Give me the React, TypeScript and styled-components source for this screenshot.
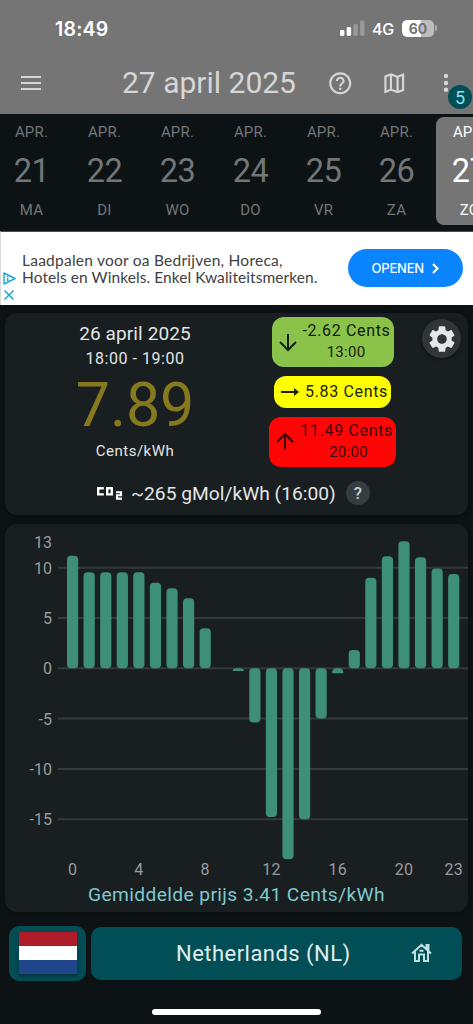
import React from "react";
import styled, { createGlobalStyle } from "styled-components";

const GlobalStyle = createGlobalStyle`
  *, *::before, *::after { box-sizing: border-box; }
  html, body { margin: 0; padding: 0; background: #0d1315; }
  body { overflow: hidden; font-family: Roboto, "Liberation Sans", sans-serif; }
`;

const Screen = styled.div`
  display: flex;
  flex-direction: column;
  width: 473px;
  height: 1024px;
  overflow: hidden;
  background: #0d1315;
`;

const Header = styled.header`
  height: 114px;
  flex: none;
  background: #757575;
`;

const StatusBar = styled.div`
  display: flex;
  align-items: center;
  height: 56px;
  padding: 0 36px 0 55px;
  color: #fff;
`;

const Clock = styled.span`
  flex: 1;
  font: 600 19.5px/24px Inter, sans-serif;
  letter-spacing: 0.2px;
  padding-top: 2px;
`;

const Network = styled.span`
  margin: 2px 8px 0 7px;
  font: 500 16px/20px Inter, sans-serif;
  letter-spacing: -0.2px;
`;

const BatteryWrap = styled.span`
  display: flex;
  align-items: center;
  gap: 1px;
`;

const Battery = styled.span`
  width: 32px;
  height: 17px;
  border-radius: 5px;
  background: linear-gradient(90deg, #fff 60%, #bdbdbd 60%);
  color: #757575;
  font: 700 14px/17px Inter, sans-serif;
  text-align: center;
`;

const BatteryCap = styled.span`
  width: 2px;
  height: 6px;
  border-radius: 0 2px 2px 0;
  background: #b0b0b0;
`;

const Toolbar = styled.div`
  display: flex;
  align-items: center;
  height: 54px;
  padding-left: 21px;
  color: #d6d6d6;
`;

const Title = styled.h1`
  flex: none;
  width: 175px;
  margin: 0 30px 0 81px;
  font-size: 30px;
  font-weight: 400;
  line-height: 36px;
  white-space: nowrap;
`;

const ToolIcon = styled.span<{ $gap?: number }>`
  display: flex;
  margin-right: ${(p) => p.$gap ?? 0}px;
`;

const MenuAnchor = styled.span`
  position: relative;
  display: flex;
`;

const Badge = styled.span`
  position: absolute;
  left: 5px;
  top: 12px;
  width: 24px;
  height: 24px;
  border-radius: 50%;
  background: #024e56;
  color: #8fe0e6;
  font-size: 18px;
  line-height: 25px;
  text-align: center;
`;

const Days = styled.nav`
  display: flex;
  flex: none;
  gap: 7px;
  height: 117px;
  padding: 3px 0 6px;
  margin-left: -2px;
  overflow: hidden;
`;

const Day = styled.div<{ $active?: boolean }>`
  display: flex;
  flex: none;
  flex-direction: column;
  align-items: center;
  width: 66px;
  padding-left: 1px;
  border-radius: 8px;
  background: ${(p) => (p.$active ? "#757575" : "transparent")};
  color: ${(p) => (p.$active ? "#fff" : "#737677")};
`;

const DayText = styled.span`
  font-size: 15px;
  line-height: 20px;
  margin-top: 5px;
  letter-spacing: 0.2px;
`;

const DayNumber = styled.span`
  font-size: 32.5px;
  line-height: 38px;
  margin: 10px 0 5px;
  letter-spacing: -0.4px;
`;

const Ad = styled.section`
  display: flex;
  align-items: center;
  flex: none;
  height: 74px;
  border-top: 1px solid #4a4d4e;
  border-left: 1px solid #d8d8d8;
  background: #fff;
  padding-right: 10px;
`;

const AdMarks = styled.div`
  display: flex;
  flex-direction: column;
  align-items: flex-start;
  gap: 4px;
  width: 21px;
  padding: 40px 0 0 2px;
  align-self: flex-start;
`;

const AdCopy = styled.div`
  display: flex;
  flex: 1;
  flex-direction: column;
  color: #3f4043;
  font: 400 15.5px/16.5px Lato, sans-serif;
  white-space: nowrap;
`;

const AdLine = styled.span<{ $spacing: number }>`
  letter-spacing: ${(p) => p.$spacing}px;
`;

const OpenButton = styled.button`
  display: flex;
  align-items: center;
  justify-content: center;
  gap: 8px;
  width: 115.5px;
  height: 38px;
  margin-top: -1px;
  padding: 0;
  border: 0;
  border-radius: 19px;
  background: #0a85ff;
  color: #fff;
  font: 500 13px/20px Inter, sans-serif;
  letter-spacing: -0.2px;
`;

const Card = styled.section`
  flex: none;
  margin: 0 5px;
  border-radius: 12px;
  background: #191e20;
  color: #e3e5e6;
  box-shadow: 0 1px 4px rgba(0, 0, 0, 0.35);
`;

const PriceCard = styled(Card)`
  height: 202px;
  margin-top: 8px;
`;

const PriceRow = styled.div`
  display: flex;
  height: 160px;
`;

const Current = styled.div`
  display: flex;
  flex-direction: column;
  align-items: center;
  width: 260px;
  padding-top: 8px;
`;

const DateLine = styled.span`
  font-size: 19px;
  line-height: 26px;
  letter-spacing: 0.12px;
`;

const HourLine = styled.span`
  font-size: 16px;
  line-height: 24px;
  letter-spacing: 0.55px;
`;

const BigPrice = styled.span`
  height: 66px;
  margin-top: 1px;
  color: #86791e;
  font-size: 61px;
  line-height: 66px;
  letter-spacing: -0.1px;
`;

const Unit = styled.span`
  margin-top: 3px;
  font-size: 15px;
  line-height: 20px;
  letter-spacing: 0.5px;
`;

const Stats = styled.div`
  display: flex;
  flex-direction: column;
  align-items: center;
  gap: 9px;
  width: 135px;
  padding-top: 4px;
`;

const Pill = styled.div<{ $bg: string; $fg: string; $w: number; $h: number }>`
  display: flex;
  align-items: center;
  justify-content: flex-end;
  width: ${(p) => p.$w}px;
  height: ${(p) => p.$h}px;
  border-radius: 12px;
  padding: 0 3px 1px 7px;
  background: ${(p) => p.$bg};
  color: ${(p) => p.$fg};
  font-size: 16px;
  letter-spacing: 0.66px;
  white-space: nowrap;
`;

const PillText = styled.div`
  display: flex;
  flex: 1;
  flex-direction: column;
  align-items: flex-end;
  line-height: 22px;
`;

const PillTime = styled.span`
  margin-right: 25px;
  font-size: 15px;
  line-height: 21px;
  letter-spacing: 0.3px;
`;

const Settings = styled.button`
  display: flex;
  align-items: center;
  justify-content: center;
  width: 39px;
  height: 39px;
  margin: 6px 0 0 22px;
  padding: 0;
  border: 0;
  border-radius: 50%;
  background: #303538;
  box-shadow: 0 1px 4px rgba(0, 0, 0, 0.5);
`;

const Co2Row = styled.div`
  display: flex;
  align-items: center;
  height: 40px;
  padding-left: 91px;
  font-size: 19.2px;
  letter-spacing: 0.02px;
  white-space: nowrap;
`;

const Co2Text = styled.span`
  width: 205px;
  margin-left: 8px;
`;

const Help = styled.span`
  width: 24px;
  height: 24px;
  margin-left: 10px;
  border-radius: 50%;
  background: #363c3f;
  color: #bcd3d6;
  font-size: 17px;
  font-weight: 500;
  line-height: 25px;
  text-align: center;
`;

const ChartCard = styled(Card)`
  height: 388px;
  margin-top: 9px;
`;

const Chart = styled.svg`
  display: block;
  font-family: Roboto, sans-serif;
  font-size: 16px;
`;

const Average = styled.div`
  color: #7fc9d0;
  font-size: 19.2px;
  line-height: 24px;
  letter-spacing: 0.38px;
  text-align: center;
`;

const Footer = styled.footer`
  display: flex;
  flex: none;
  align-items: center;
  gap: 5px;
  margin: 13px 11px 0 9px;
  height: 56px;
`;

const FlagButton = styled.div`
  display: flex;
  align-items: center;
  justify-content: center;
  width: 77px;
  height: 55px;
  border-radius: 10px;
  background: #034d55;
`;

const Flag = styled.div`
  width: 58px;
  height: 42px;
  background: linear-gradient(#ae1c28 33.3%, #fff 33.3% 66.6%, #21468b 66.6%);
  box-shadow: 0 2px 4px rgba(0, 0, 0, 0.35);
`;

const Country = styled.div`
  display: flex;
  align-items: center;
  flex: 1;
  height: 53px;
  padding: 0 30px 0 85px;
  border-radius: 10px;
  background: #014e56;
  color: #e0eced;
  font-size: 22px;
  letter-spacing: 0.47px;
`;

const CountryName = styled.span`
  flex: 1;
  white-space: nowrap;
`;

const HomeIndicator = styled.div`
  flex: none;
  width: 169px;
  height: 6px;
  margin: 28px auto 0 152px;
  border-radius: 3px;
  background: #fff;
`;

const days = [
  ["21", "MA"],
  ["22", "DI"],
  ["23", "WO"],
  ["24", "DO"],
  ["25", "VR"],
  ["26", "ZA"],
  ["27", "ZO"],
];

const prices = [
  11.2, 9.55, 9.55, 9.55, 9.55, 8.5, 7.95, 6.97, 3.98, 0, -0.28, -5.4, -14.78, -18.97, -15.0, -5.0,
  -0.5, 1.83, 9.0, 11.15, 12.64, 11.05, 9.93, 9.38,
];

const ZERO_Y = 144.3;
const UNIT = 10.06;
const BAR_W = 11.2;

const barX = (hour: number) => 67.6 + hour * 16.57;

function PriceBar({ hour, value }: { hour: number; value: number }) {
  if (value === 0) return null;
  const x = barX(hour) - BAR_W / 2;
  const h = Math.abs(value) * UNIT;
  if (h < 8) {
    const r = Math.min(4.5, h);
    return (
      <path
        fill="#3d8f78"
        d={`M${x} ${ZERO_Y + h}V${ZERO_Y + r}Q${x} ${ZERO_Y} ${x + 4} ${ZERO_Y}H${x + BAR_W - 4}Q${x + BAR_W} ${ZERO_Y} ${x + BAR_W} ${ZERO_Y + r}V${ZERO_Y + h}Z`}
      />
    );
  }
  return (
    <rect x={x} y={value > 0 ? ZERO_Y - h : ZERO_Y} width={BAR_W} height={h} rx={4} fill="#3d8f78" />
  );
}

function PriceChart() {
  return (
    <Chart width="463" height="359" viewBox="0 0 463 359">
      {[10, 5, 0, -5, -10, -15].map((v) => (
        <line key={v} x1="53" x2="463" y1={ZERO_Y - v * UNIT} y2={ZERO_Y - v * UNIT} stroke="#36393b" strokeWidth="2" />
      ))}
      <g fill="#999c9d" textAnchor="end">
        {[13, 10, 5, 0, -5, -10, -15].map((v) => (
          <text key={v} x="47" y={v === 13 ? 23.5 : ZERO_Y - v * UNIT + 6}>
            {v}
          </text>
        ))}
      </g>
      {prices.map((value, hour) => (
        <PriceBar key={hour} hour={hour} value={value} />
      ))}
      <g fill="#999c9d" textAnchor="middle" letterSpacing="0.3">
        {[0, 4, 8, 12, 16, 20, 23].map((h) => (
          <text key={h} x={barX(h)} y="351">
            {h}
          </text>
        ))}
      </g>
    </Chart>
  );
}

const ARROWS = {
  down: "M12 4V20M4 12L12 20L20 12",
  up: "M12 20V4M4 12L12 4L20 12",
};

function Arrow({ dir }: { dir: "down" | "up" }) {
  return (
    <svg width="18" height="22" viewBox="3 1 18 22" fill="none" stroke="currentColor" strokeWidth="2">
      <path d={ARROWS[dir]} />
    </svg>
  );
}

export default function App() {
  return (
    <Screen>
      <GlobalStyle />
      <Header>
        <StatusBar>
          <Clock>18:49</Clock>
          <svg width="25" height="16" viewBox="0 0 25 16">
            <rect x="0" y="10" width="4.4" height="6" rx="1.4" fill="#fff" />
            <rect x="6.7" y="7" width="4.4" height="9" rx="1.4" fill="#fff" />
            <rect x="13.4" y="4" width="4.4" height="12" rx="1.4" fill="#999" />
            <rect x="20.1" y="0.5" width="4.4" height="15.5" rx="1.4" fill="#999" />
          </svg>
          <Network>4G</Network>
          <BatteryWrap>
            <Battery>60</Battery>
            <BatteryCap />
          </BatteryWrap>
        </StatusBar>
        <Toolbar>
          <ToolIcon>
            <svg width="20" height="14" viewBox="0 0 20 14" fill="currentColor">
              <path d="M0 0h20v2H0zM0 6h20v2H0zM0 12h20v2H0z" />
            </svg>
          </ToolIcon>
          <Title>27 april 2025</Title>
          <ToolIcon $gap={27}>
            <svg width="26.5" height="26.5" viewBox="0 0 24 24" fill="currentColor">
              <path d="M11 18h2v-2h-2v2zm1-16C6.48 2 2 6.48 2 12s4.48 10 10 10 10-4.48 10-10S17.52 2 12 2zm0 18c-4.41 0-8-3.59-8-8s3.59-8 8-8 8 3.59 8 8-3.59 8-8 8zm0-14c-2.21 0-4 1.79-4 4h2c0-1.1.9-2 2-2s2 .9 2 2c0 2-3 1.75-3 5h2c0-2.25 3-2.5 3-5 0-2.21-1.79-4-4-4z" />
            </svg>
          </ToolIcon>
          <ToolIcon $gap={36}>
            <svg width="26.5" height="26.5" viewBox="0 0 24 24" fill="currentColor">
              <path d="M20.5 3l-.16.03L15 5.1 9 3 3.36 4.9c-.21.07-.36.25-.36.48V20.5c0 .28.22.5.5.5l.16-.03L9 18.9l6 2.1 5.64-1.9c.21-.07.36-.25.36-.48V3.5c0-.28-.22-.5-.5-.5zM10 5.47l4 1.4v11.66l-4-1.4V5.47zm-5 .99l3-1.01v11.7l-3 1.16V6.46zm14 11.08l-3 1.01V6.86l3-1.16v11.84z" />
            </svg>
          </ToolIcon>
          <MenuAnchor>
            <svg width="6" height="20" viewBox="0 0 6 20" fill="currentColor">
              <circle cx="3" cy="3" r="2.2" />
              <circle cx="3" cy="10" r="2.2" />
              <circle cx="3" cy="16.8" r="2.2" />
            </svg>
            <Badge>5</Badge>
          </MenuAnchor>
        </Toolbar>
      </Header>

      <Days>
        {days.map(([num, name]) => (
          <Day key={num} $active={num === "27"}>
            <DayText>APR.</DayText>
            <DayNumber>{num}</DayNumber>
            <DayText>{name}</DayText>
          </Day>
        ))}
      </Days>

      <Ad>
        <AdMarks>
          <svg width="13" height="13" viewBox="0 0 13 13" fill="none" stroke="#1aa7cf" strokeWidth="1.4">
            <path d="M1 1L12 6.5L1 12Z" strokeLinejoin="round" />
            <path d="M4.7 5.8V9M4.7 3.9V5" />
          </svg>
          <svg width="12" height="12" viewBox="0 0 12 12" fill="none" stroke="#1aa7cf" strokeWidth="1.5">
            <path d="M1.5 1.5L10.5 10.5M10.5 1.5L1.5 10.5" />
          </svg>
        </AdMarks>
        <AdCopy>
          <AdLine $spacing={0.24}>Laadpalen voor oa Bedrijven, Horeca,</AdLine>
          <AdLine $spacing={0.07}>Hotels en Winkels. Enkel Kwaliteitsmerken.</AdLine>
        </AdCopy>
        <OpenButton>
          OPENEN
          <svg width="7" height="11" viewBox="0 0 7 11" fill="none" stroke="#fff" strokeWidth="2.1">
            <path d="M1 1L5.5 5.5L1 10" />
          </svg>
        </OpenButton>
      </Ad>

      <PriceCard>
        <PriceRow>
          <Current>
            <DateLine>26 april 2025</DateLine>
            <HourLine>18:00 - 19:00</HourLine>
            <BigPrice>7.89</BigPrice>
            <Unit>Cents/kWh</Unit>
          </Current>
          <Stats>
            <Pill $bg="#8bc34a" $fg="#10200d" $w={122} $h={50}>
              <Arrow dir="down" />
              <PillText>
                <span>-2.62 Cents</span>
                <PillTime>13:00</PillTime>
              </PillText>
            </Pill>
            <Pill $bg="#ffff00" $fg="#20210a" $w={117} $h={32}>
              <svg width="18" height="10" viewBox="0 0 18 10" fill="currentColor">
                <path d="M0 4h13V1l5 4-5 4V6H0z" />
              </svg>
              <PillText>5.83 Cents</PillText>
            </Pill>
            <Pill $bg="#ff0505" $fg="#3a0505" $w={127} $h={50}>
              <Arrow dir="up" />
              <PillText>
                <span>11.49 Cents</span>
                <PillTime>20:00</PillTime>
              </PillText>
            </Pill>
          </Stats>
          <Settings aria-label="settings">
            <svg width="32" height="32" viewBox="0 0 24 24" fill="#e4e7e9">
              <path d="M19.14 12.94c.04-.3.06-.61.06-.94 0-.32-.02-.64-.07-.94l2.03-1.58c.18-.14.23-.41.12-.61l-1.92-3.32c-.12-.22-.37-.29-.59-.22l-2.39.96c-.5-.38-1.03-.7-1.62-.94l-.36-2.54c-.04-.24-.24-.41-.48-.41h-3.84c-.24 0-.43.17-.47.41l-.36 2.54c-.59.24-1.13.57-1.62.94l-2.39-.96c-.22-.08-.47 0-.59.22L2.74 8.87c-.12.21-.08.47.12.61l2.03 1.58c-.05.3-.09.63-.09.94s.02.64.07.94l-2.03 1.58c-.18.14-.23.41-.12.61l1.92 3.32c.12.22.37.29.59.22l2.39-.96c.5.38 1.03.7 1.62.94l.36 2.54c.05.24.24.41.48.41h3.84c.24 0 .44-.17.47-.41l.36-2.54c.59-.24 1.13-.56 1.62-.94l2.39.96c.22.08.47 0 .59-.22l1.92-3.32c.12-.22.07-.47-.12-.61l-2.01-1.58zM12 15.6c-1.98 0-3.6-1.62-3.6-3.6s1.62-3.6 3.6-3.6 3.6 1.62 3.6 3.6-1.62 3.6-3.6 3.6z" />
            </svg>
          </Settings>
        </PriceRow>
        <Co2Row>
          <svg width="27" height="14" viewBox="0 0 27 14" fill="none" stroke="#fff" strokeWidth="2.4">
            <path d="M7.8 2.2H2.2V8.4H7.8M11.2 2.2H15.8V8.4H11.2Z" />
            <path d="M20 6.2H25V9.2H21V12.6H26" strokeWidth="2.1" />
          </svg>
          <Co2Text>~265 gMol/kWh (16:00)</Co2Text>
          <Help>?</Help>
        </Co2Row>
      </PriceCard>

      <ChartCard>
        <PriceChart />
        <Average>Gemiddelde prijs 3.41 Cents/kWh</Average>
      </ChartCard>

      <Footer>
        <FlagButton>
          <Flag />
        </FlagButton>
        <Country>
          <CountryName>Netherlands (NL)</CountryName>
          <svg width="21" height="20" viewBox="0 0 21 20" fill="none" stroke="#bfe0e5" strokeWidth="2">
            <path d="M1 10.5L10.5 1.8L20 10.5M15.500 6V2H17.500V8M4 8.500V18H8V11.500H13V18H17V8.500M8.500 7.800H12.500" />
          </svg>
        </Country>
      </Footer>
      <HomeIndicator />
    </Screen>
  );
}
